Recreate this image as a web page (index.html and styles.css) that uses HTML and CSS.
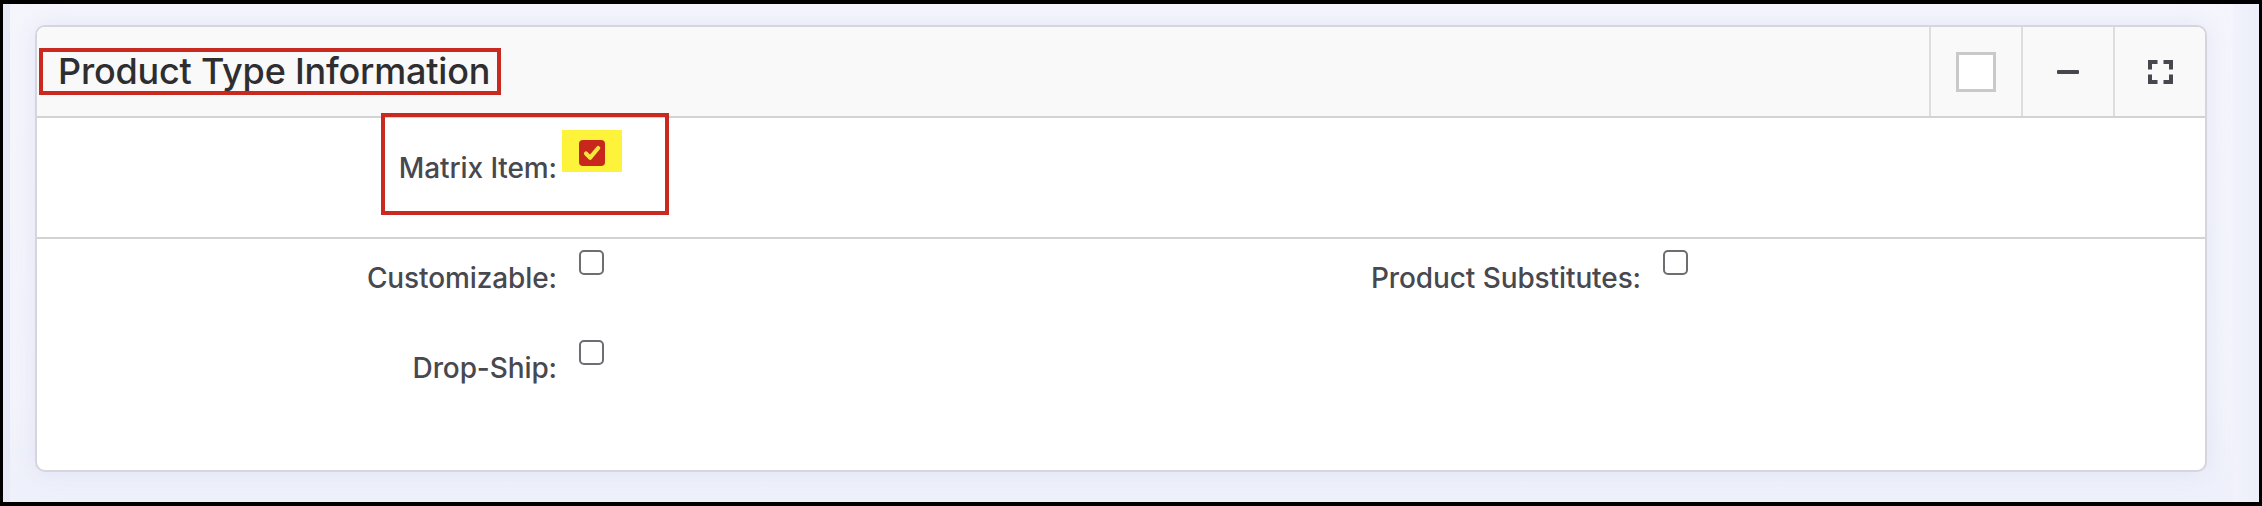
FILE: index.html
```html
<!DOCTYPE html>
<html lang="en">
<head>
<meta charset="utf-8">
<title>Product Type Information</title>
<link rel="stylesheet" href="styles.css">
</head>
<body>
<div class="frame">
  <div class="page">
    <main class="main">
      <section class="card">
        <header class="card-head">
          <h2 class="title">Product Type Information</h2>
          <div class="tools">
            <button class="tool" type="button" aria-label="Select"><span class="tool-square"></span></button>
            <button class="tool" type="button" aria-label="Collapse"><span class="tool-minus"></span></button>
            <button class="tool" type="button" aria-label="Maximize">
              <svg class="tool-expand" width="25" height="24" viewBox="0 0 25 24" aria-hidden="true">
                <path d="M2 9.5V2h7.5M15.5 2H23v7.5M2 14.5V22h7.5M15.5 22H23v-7.5" fill="none" stroke="#47474d" stroke-width="4"/>
              </svg>
            </button>
          </div>
        </header>

        <div class="sec sec-matrix">
          <div class="field field-matrix">
            <span class="label label-matrix">Matrix Item:</span>
            <span class="cell cell-hl">
              <span class="cb cb-on">
                <svg width="26" height="26" viewBox="0 0 26 26" aria-hidden="true">
                  <path d="M7 13.5l4.2 4.2L19.2 8" fill="none" stroke="#f6e53c" stroke-width="4.2" stroke-linecap="round" stroke-linejoin="round"/>
                </svg>
              </span>
            </span>
            <span class="annot"></span>
          </div>
        </div>

        <div class="sec sec-grid">
          <div class="field">
            <span class="label">Customizable:</span>
            <span class="cell"><span class="cb"></span></span>
          </div>
          <div class="field">
            <span class="label">Product Substitutes:</span>
            <span class="cell"><span class="cb"></span></span>
          </div>
          <div class="field">
            <span class="label">Drop-Ship:</span>
            <span class="cell"><span class="cb"></span></span>
          </div>
        </div>
      </section>
    </main>
    <div class="rail"></div>
  </div>
</div>
</body>
</html>
```

FILE: styles.css
```css
* { box-sizing: border-box; }

html, body {
  margin: 0;
  padding: 0;
  background: #000;
}

body {
  font-family: Inter, "Noto Sans", "Liberation Sans", sans-serif;
}

.frame {
  width: 2262px;
  height: 506px;
  padding: 4px 3px 4px 3px;
}

.page {
  display: flex;
  height: 498px;
  background: #f4f5fc;
  border-left: 7px solid #e8eaf8;
}

.main {
  flex: 1;
  padding: 21px 26px 30px 25px;
  background: linear-gradient(180deg, #f5f6fc 0%, #f3f4fb 80%, #eef0fa 100%);
}

.rail {
  width: 26px;
  background: linear-gradient(90deg, #f1f2fb 0%, #eceef9 100%);
}

.card {
  height: 447px;
  background: #fff;
  border: 2px solid #d5d6dd;
  border-radius: 10px;
  display: flex;
  flex-direction: column;
  box-shadow: 0 0 22px rgba(210, 214, 240, 0.55);
}

.card-head {
  display: flex;
  align-items: center;
  height: 91px;
  background: #f9f9f9;
  border-bottom: 2px solid #d3d3d6;
  border-radius: 8px 8px 0 0;
}

.title {
  margin: 0 0 0 2px;
  height: 47px;
  padding: 0 7px 0 15px;
  border: 4px solid #c9291e;
  font-size: 36px;
  font-weight: 500;
  line-height: 39px;
  color: #2e2e30;
  letter-spacing: -0.2px;
}

.tools {
  margin-left: auto;
  display: flex;
  align-self: stretch;
}

.tool {
  width: 92px;
  padding: 0;
  margin: 0;
  background: transparent;
  border: 0;
  border-left: 2px solid #dedede;
  display: flex;
  align-items: center;
  justify-content: center;
}

.tool-square {
  width: 40px;
  height: 40px;
  background: #fff;
  border: 3px solid #c9c9c9;
}

.tool-minus {
  width: 22px;
  height: 4px;
  background: #47474d;
  border-radius: 1px;
}

.tool-expand { display: block; }

.sec {
  border-bottom: 2px solid #d3d3d6;
}

.sec-matrix {
  height: 121px;
  padding-top: 12px;
}

.sec-grid {
  flex: 1;
  border-bottom: 0;
  display: grid;
  grid-template-columns: 1fr 1fr;
  grid-auto-rows: 90px;
  padding-top: 11px;
}

.field {
  position: relative;
  display: flex;
  align-items: flex-start;
}

.label {
  width: 520px;
  flex: none;
  text-align: right;
  font-size: 28px;
  font-weight: 500;
  line-height: 34px;
  color: #48484f;
  letter-spacing: -0.1px;
  padding-top: 11px;
}

.label-matrix {
  padding-top: 21px;
}

.cell {
  margin-left: 5px;
  padding-left: 17px;
  display: flex;
}

.cell-hl {
  background: #fcf33a;
  padding: 10px 17px 6px 17px;
}

.cb {
  width: 25px;
  height: 25px;
  border: 2px solid #6d6d72;
  border-radius: 5px;
  background: #fff;
  display: block;
}

.cb-on {
  width: 26px;
  height: 26px;
  border: 0;
  background: #c7281b;
  border-radius: 4px;
}

.cb-on svg { display: block; }

.annot {
  position: absolute;
  left: 344px;
  top: -17px;
  width: 288px;
  height: 102px;
  border: 4px solid #c9291e;
  pointer-events: none;
}
```
